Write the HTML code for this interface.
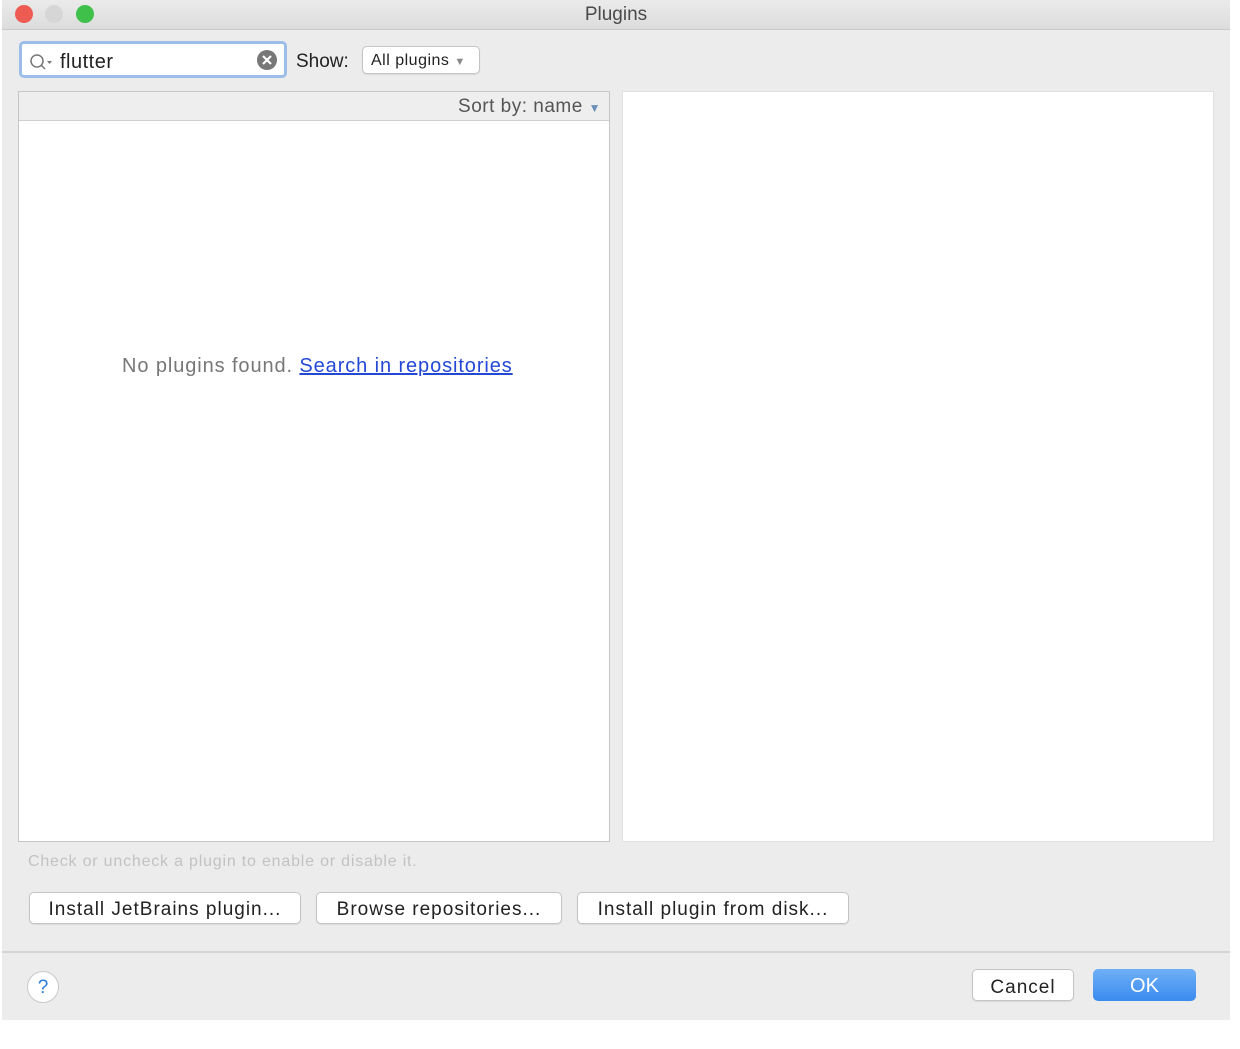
<!DOCTYPE html>
<html><head><meta charset="utf-8"><style>
*{box-sizing:border-box;margin:0;padding:0}
body{width:1240px;height:1049px;background:#fff;position:relative;overflow:hidden;font-family:"Liberation Sans",sans-serif}
.a{position:absolute}
.win{left:2px;top:0;width:1228px;height:1020px;background:#ececec}
.title{left:2px;top:0;width:1228px;height:30px;background:linear-gradient(#ebebeb,#dcdcdc);border-bottom:1px solid #c8c8c8;text-align:center;font-size:19px;color:#4a4a4a;line-height:30px}
.dot{width:18px;height:18px;border-radius:50%;top:5px}
.btn{background:#fff;border:1px solid #c4c4c4;border-radius:5px;font-size:19px;color:#222;text-align:center;box-shadow:0 1px 1px rgba(0,0,0,.08);letter-spacing:1px}
</style></head><body>
<div class="a win"></div>
<div class="a title">Plugins</div>
<div class="a dot" style="left:15px;background:#ee5b52"></div>
<div class="a dot" style="left:45px;background:#d6d6d6"></div>
<div class="a dot" style="left:76px;background:#3fc04a"></div>

<div class="a" style="left:19px;top:41px;width:268px;height:37px;border:3px solid #9cbde8;border-radius:5px;background:#fff"></div>
<svg class="a" style="left:28px;top:52px" width="28" height="20"><circle cx="9" cy="9" r="6" fill="none" stroke="#777" stroke-width="1.5"/><line x1="13" y1="13" x2="17" y2="17" stroke="#777" stroke-width="1.5"/><path d="M19 9h5l-2.5 3z" fill="#777"/></svg>
<div class="a" style="left:60px;top:51px;font-size:20px;color:#222;letter-spacing:0.5px">flutter</div>
<svg class="a" style="left:256px;top:49px" width="22" height="22"><circle cx="11" cy="11" r="10" fill="#777"/><path d="M7 7l8 8M15 7l-8 8" stroke="#fff" stroke-width="2.2"/></svg>
<div class="a" style="left:296px;top:51px;font-size:19px;color:#222">Show:</div>
<div class="a btn" style="left:362px;top:46px;width:118px;height:28px;font-size:16px;line-height:28px;text-align:left;padding-left:8px;letter-spacing:0.5px">All plugins <span style="color:#888;font-size:11px">▼</span></div>

<div class="a" style="left:18px;top:91px;width:592px;height:751px;background:#fff;border:1px solid #c6c6c6"></div>
<div class="a" style="left:19px;top:92px;width:590px;height:29px;background:#eeeeee;border-bottom:1px solid #cfcfcf;text-align:right;padding-right:8px;font-size:19px;color:#555;line-height:30px;letter-spacing:0.5px">Sort by: name <span style="color:#6b8fb8;font-size:12px">▼</span></div>
<div class="a" style="left:122px;top:355px;font-size:20px;color:#777;letter-spacing:0.9px;white-space:nowrap">No plugins found. <span style="color:#2348d6;text-decoration:underline">Search in repositories</span></div>

<div class="a" style="left:622px;top:91px;width:592px;height:751px;background:#fff;border:1px solid #e0e0e0"></div>

<div class="a" style="left:28px;top:853px;font-size:16px;color:#c2c2c2;letter-spacing:0.8px">Check or uncheck a plugin to enable or disable it.</div>
<div class="a btn" style="left:29px;top:892px;width:272px;height:32px;line-height:33px">Install JetBrains plugin...</div>
<div class="a btn" style="left:316px;top:892px;width:246px;height:32px;line-height:33px">Browse repositories...</div>
<div class="a btn" style="left:577px;top:892px;width:272px;height:32px;line-height:33px">Install plugin from disk...</div>

<div class="a" style="left:2px;top:951px;width:1228px;height:2px;background:#d4d4d4"></div>
<div class="a" style="left:27px;top:971px;width:32px;height:32px;border-radius:50%;background:#fff;border:1px solid #c8c8c8;text-align:center;line-height:32px;font-size:19px;color:#2a7be0">?</div>
<div class="a btn" style="left:972px;top:969px;width:102px;height:32px;line-height:35px">Cancel</div>
<div class="a" style="left:1093px;top:969px;width:103px;height:32px;border-radius:5px;background:linear-gradient(#6fb0f6,#3a8bef);color:#fff;text-align:center;line-height:35px;font-size:20px">OK</div>
</body></html>
